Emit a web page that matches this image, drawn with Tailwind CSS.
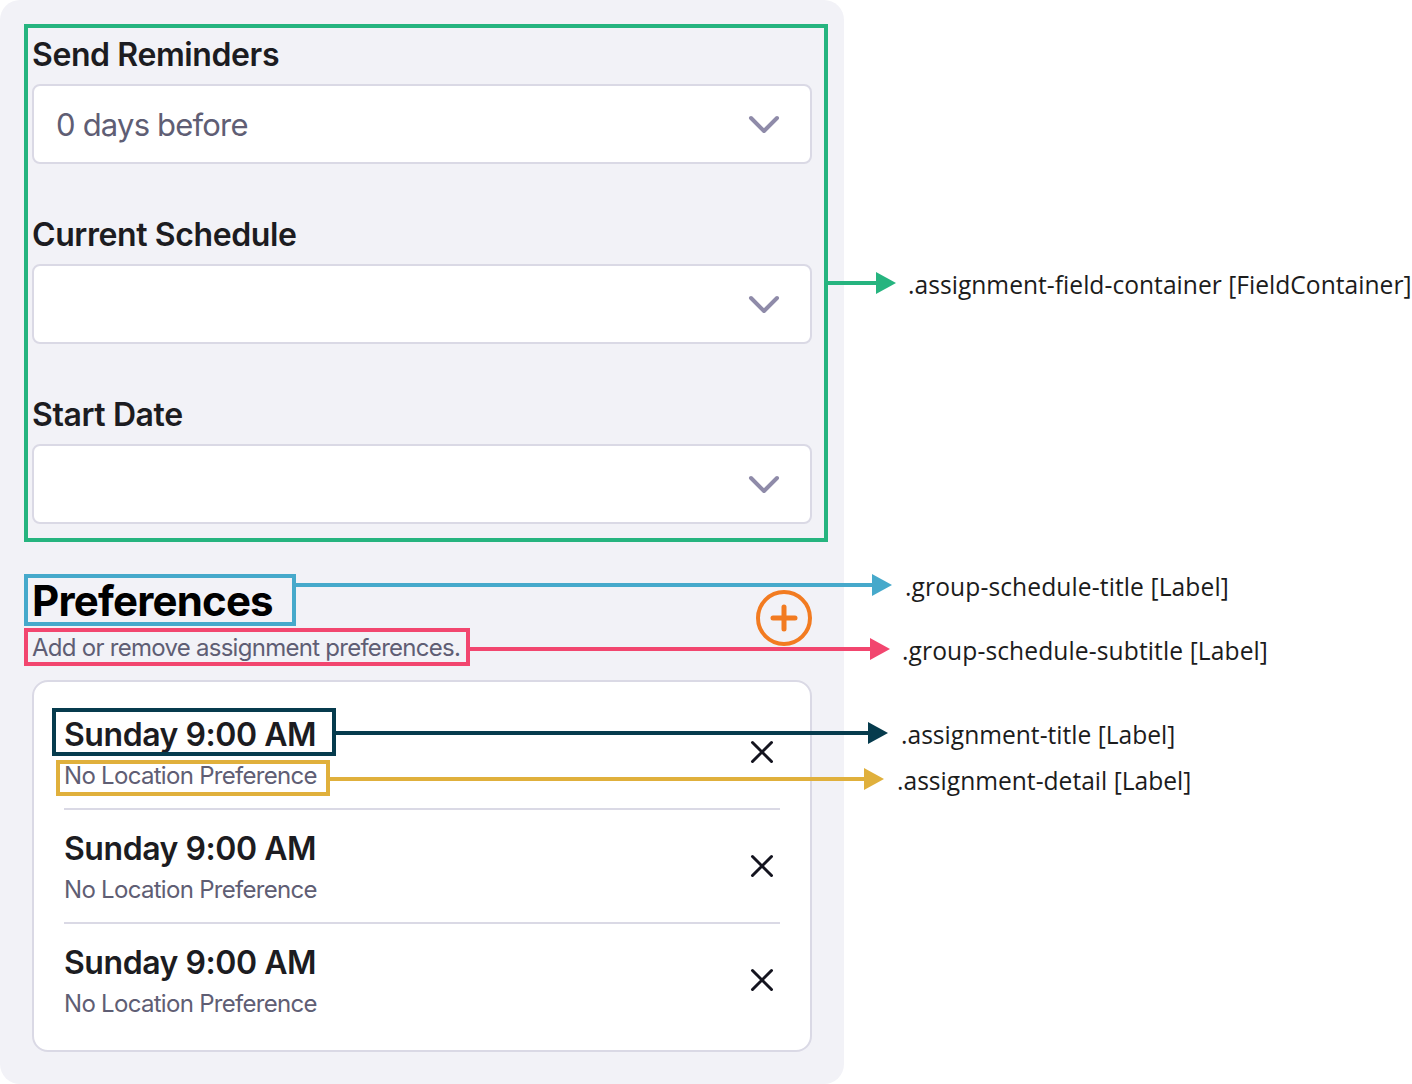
<!DOCTYPE html>
<html lang="en">
<head>
  <meta charset="UTF-8" />
  <title>Assignment preferences</title>
  <script src="https://cdn.jsdelivr.net/npm/@tailwindcss/browser@4"></script>
</head>
<body class="bg-white">
  <div class="relative w-[1412px] h-[1084px] overflow-hidden font-['Inter',sans-serif]">

    <!-- Panel -->
    <main class="w-[844px] h-[1084px] bg-[#f2f2f7] rounded-[20px] pt-6 px-6">

      <!-- Field container -->
      <section class="w-[804px] h-[518px] border-4 border-[#26b47f] pl-1 pr-3 flex flex-col gap-[44px]">
        <div>
          <label class="block h-[56px] pt-[5px] text-[32px] leading-[44px] font-semibold tracking-[-0.4px] text-[#1c1c21]">Send Reminders</label>
          <div class="h-[80px] bg-white border-2 border-[#dad9e5] rounded-lg pl-[22px] pr-[30px] flex items-center justify-between">
            <span class="pt-[2px] text-[31px] text-[#5f5e74] tracking-[-0.8px]">0 days before</span>
            <svg class="w-[32px] h-[20px] mt-[1px]" viewBox="0 0 32 20" fill="none" stroke="#8f8ba9" stroke-width="4" stroke-linecap="round" stroke-linejoin="round"><path d="M3 3l13 13L29 3" /></svg>
          </div>
        </div>
        <div>
          <label class="block h-[56px] pt-[5px] text-[32px] leading-[44px] font-semibold tracking-[-0.4px] text-[#1c1c21]">Current Schedule</label>
          <div class="h-[80px] bg-white border-2 border-[#dad9e5] rounded-lg pr-[30px] flex items-center justify-end">
            <svg class="w-[32px] h-[20px] mt-[1px]" viewBox="0 0 32 20" fill="none" stroke="#8f8ba9" stroke-width="4" stroke-linecap="round" stroke-linejoin="round"><path d="M3 3l13 13L29 3" /></svg>
          </div>
        </div>
        <div>
          <label class="block h-[56px] pt-[5px] text-[32px] leading-[44px] font-semibold tracking-[-0.4px] text-[#1c1c21]">Start Date</label>
          <div class="h-[80px] bg-white border-2 border-[#dad9e5] rounded-lg pr-[30px] flex items-center justify-end">
            <svg class="w-[32px] h-[20px] mt-[1px]" viewBox="0 0 32 20" fill="none" stroke="#8f8ba9" stroke-width="4" stroke-linecap="round" stroke-linejoin="round"><path d="M3 3l13 13L29 3" /></svg>
          </div>
        </div>
      </section>

      <!-- Group header -->
      <header class="mt-8 flex justify-between">
        <div>
          <h2 class="w-[272px] h-[52px] border-4 border-[#46a9cb] pl-1 text-[42px] leading-[46px] font-bold tracking-[-0.8px] text-black">Preferences</h2>
          <p class="mt-[2px] w-[446px] h-[38px] border-4 border-[#f2466f] pl-1 whitespace-nowrap text-[24px] leading-[32px] tracking-[-0.73px] text-[#5f5e74]">Add or remove assignment preferences.</p>
        </div>
        <button class="mt-[16px] mr-2 w-[56px] h-[56px]">
          <svg class="w-[56px] h-[56px]" viewBox="0 0 56 56" fill="none" stroke="#f27b21" stroke-linecap="round"><circle cx="28" cy="28" r="26" stroke-width="4" /><path d="M17 28h22M28 17v22" stroke-width="5" /></svg>
        </button>
      </header>

      <!-- Assignment list -->
      <div class="mt-[14px] ml-2 w-[780px] h-[372px] bg-white border-2 border-[#dad9e5] rounded-2xl px-[30px] py-[14px]">
        <div class="h-[112px] pt-[17px] flex justify-between">
          <div>
            <div class="text-[32px] leading-[44px] font-semibold tracking-[-0.45px] text-[#1c1c21]">Sunday 9:00 AM</div>
            <div class="text-[24px] leading-[38px] tracking-[-0.7px] text-[#5f5e74]">No Location Preference</div>
          </div>
          <button class="w-[24px] h-[24px] mt-[27px] mr-[6px]"><svg class="w-[24px] h-[24px]" viewBox="0 0 24 24" fill="none" stroke="#14141f" stroke-width="3" stroke-linecap="round"><path d="M2.5 2.5l19 19M21.5 2.5l-19 19" /></svg></button>
        </div>
        <div class="h-[114px] pt-[17px] flex justify-between border-t-2 border-[#dad9e5]">
          <div>
            <div class="text-[32px] leading-[44px] font-semibold tracking-[-0.45px] text-[#1c1c21]">Sunday 9:00 AM</div>
            <div class="text-[24px] leading-[38px] tracking-[-0.7px] text-[#5f5e74]">No Location Preference</div>
          </div>
          <button class="w-[24px] h-[24px] mt-[27px] mr-[6px]"><svg class="w-[24px] h-[24px]" viewBox="0 0 24 24" fill="none" stroke="#14141f" stroke-width="3" stroke-linecap="round"><path d="M2.5 2.5l19 19M21.5 2.5l-19 19" /></svg></button>
        </div>
        <div class="h-[114px] pt-[17px] flex justify-between border-t-2 border-[#dad9e5]">
          <div>
            <div class="text-[32px] leading-[44px] font-semibold tracking-[-0.45px] text-[#1c1c21]">Sunday 9:00 AM</div>
            <div class="text-[24px] leading-[38px] tracking-[-0.7px] text-[#5f5e74]">No Location Preference</div>
          </div>
          <button class="w-[24px] h-[24px] mt-[27px] mr-[6px]"><svg class="w-[24px] h-[24px]" viewBox="0 0 24 24" fill="none" stroke="#14141f" stroke-width="3" stroke-linecap="round"><path d="M2.5 2.5l19 19M21.5 2.5l-19 19" /></svg></button>
        </div>
      </div>
    </main>

    <!-- Annotation overlay -->
    <div class="absolute left-[52px] top-[708px] w-[284px] h-[48px] border-4 border-[#063b4d]"></div>
    <div class="absolute left-[56px] top-[760px] w-[274px] h-[36px] border-4 border-[#e0b03c]"></div>
    <svg class="absolute left-0 top-0 w-[1412px] h-[1084px] pointer-events-none" viewBox="0 0 1412 1084" fill="none" stroke-width="4">
      <path d="M828 283h50" stroke="#26b47f" /><path d="M876 272l20 11-20 11z" fill="#26b47f" />
      <path d="M296 585h576" stroke="#46a9cb" /><path d="M872 574l20 11-20 11z" fill="#46a9cb" />
      <path d="M470 649h400" stroke="#f2466f" /><path d="M870 638l20 11-20 11z" fill="#f2466f" />
      <path d="M336 733h534" stroke="#063b4d" /><path d="M868 722l20 11-20 11z" fill="#063b4d" />
      <path d="M330 779h536" stroke="#e0b03c" /><path d="M864 768l20 11-20 11z" fill="#e0b03c" />
    </svg>
    <div class="absolute left-[908px] top-[268px] whitespace-nowrap font-['Open_Sans',sans-serif] text-[24.6px] leading-[34px] tracking-[0.02px] text-[#1c1c1c]">.assignment-field-container [FieldContainer]</div>
    <div class="absolute left-[905px] top-[570px] whitespace-nowrap font-['Open_Sans',sans-serif] text-[24.6px] leading-[34px] tracking-[0.1px] text-[#1c1c1c]">.group-schedule-title [Label]</div>
    <div class="absolute left-[902px] top-[634px] whitespace-nowrap font-['Open_Sans',sans-serif] text-[24.6px] leading-[34px] tracking-[0.1px] text-[#1c1c1c]">.group-schedule-subtitle [Label]</div>
    <div class="absolute left-[901px] top-[718px] whitespace-nowrap font-['Open_Sans',sans-serif] text-[24.6px] leading-[34px] text-[#1c1c1c]">.assignment-title [Label]</div>
    <div class="absolute left-[897px] top-[764px] whitespace-nowrap font-['Open_Sans',sans-serif] text-[24.6px] leading-[34px] text-[#1c1c1c]">.assignment-detail [Label]</div>
  </div>
</body>
</html>
